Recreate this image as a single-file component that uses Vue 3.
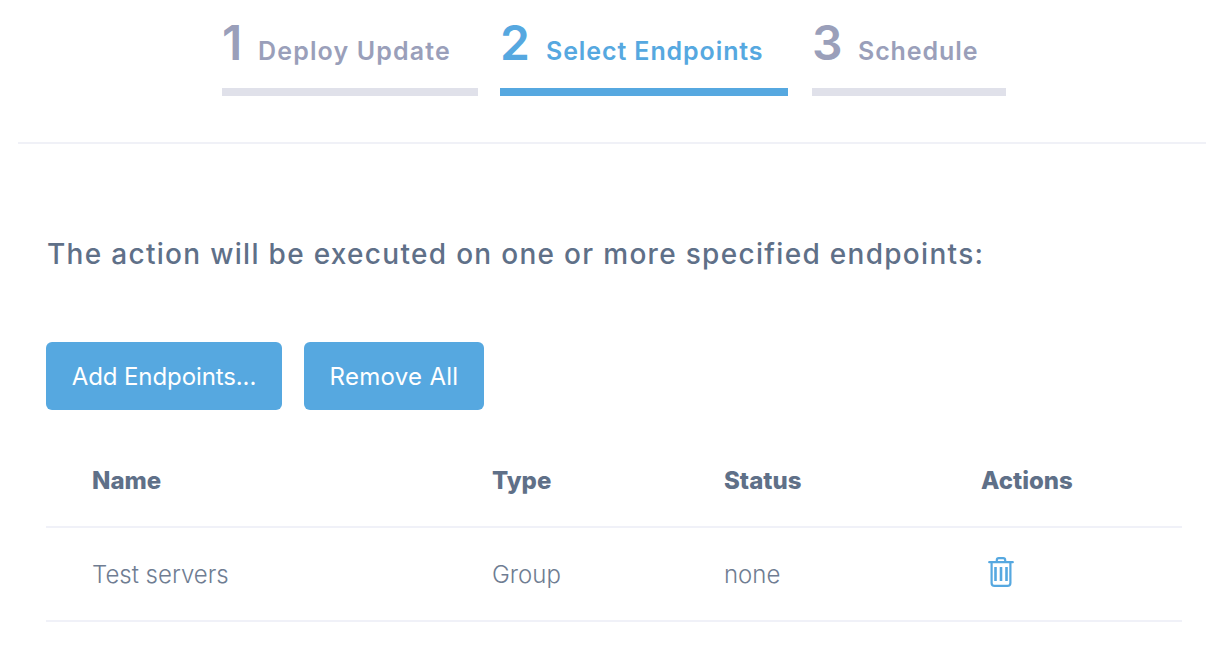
<template>
  <div class="page">
    <!-- Steps -->
    <div class="steps">
      <div
        v-for="step in steps"
        :key="step.num"
        class="step"
        :class="[step.cls, { active: step.active }]"
      >
        <span class="step-num">{{ step.num }}</span>
        <span class="step-label">{{ step.label }}</span>
      </div>
    </div>

    <div class="content">
      <p class="intro">The action will be executed on one or more specified endpoints:</p>

      <div class="actions">
        <button class="btn btn-add">Add Endpoints...</button>
        <button class="btn btn-remove">Remove All</button>
      </div>

      <!-- Endpoints table -->
      <div class="table">
        <div class="row head">
          <div>Name</div>
          <div>Type</div>
          <div>Status</div>
          <div>Actions</div>
        </div>
        <div v-for="item in endpoints" :key="item.name" class="row body">
          <div>{{ item.name }}</div>
          <div>{{ item.type }}</div>
          <div>{{ item.status }}</div>
          <div>
            <svg class="trash" viewBox="0 0 26 30" fill="none" stroke="#56a8e0" stroke-width="2.2" stroke-linecap="round" stroke-linejoin="round">
              <path d="M1.2 5.2h23.6" />
              <path d="M8.8 5V3.2a2 2 0 0 1 2-2h4.4a2 2 0 0 1 2 2V5" />
              <path d="M3.6 5.5v20.4a3 3 0 0 0 3 3h12.8a3 3 0 0 0 3-3V5.5" />
              <path stroke-width="2.6" stroke-linecap="butt" d="M7.5 10v14M13 10v14M18.5 10v14" />
            </svg>
          </div>
        </div>
      </div>
    </div>
  </div>
</template>

<script setup>
const steps = [
  { num: 1, label: 'Deploy Update', cls: 'step-one', active: false },
  { num: 2, label: 'Select Endpoints', cls: 'step-two', active: true },
  { num: 3, label: 'Schedule', cls: 'step-three', active: false }
];

const endpoints = [
  { name: 'Test servers', type: 'Group', status: 'none' }
];
</script>

<style>
html,
body {
  margin: 0;
  background: #fff;
}
</style>

<style scoped>
.page {
  width: 1206px;
  height: 646px;
  overflow: hidden;
  font-family: Inter, "Open Sans", sans-serif;
  background: #fff;
}

.steps {
  display: flex;
  gap: 22px;
  height: 144px;
  box-sizing: border-box;
  margin-left: 18px;
  padding: 14px 0 0 204px;
  border-bottom: 2px solid #f0f1f7;
}

.step {
  display: flex;
  align-items: baseline;
  height: 74px;
  border-bottom: 8px solid #e0e1ea;
  color: #9a9fba;
}

.step-one { width: 256px; }
.step-two { width: 288px; }
.step-three { width: 194px; margin-left: 2px; }

.step.active {
  color: #56a8e0;
  border-bottom-color: #56a8e0;
}

.step-num {
  font-size: 48px;
  font-weight: 600;
  line-height: 58px;
  width: 36px;
}

.step-two .step-num,
.step-three .step-num {
  width: 46px;
}

.step-label {
  font-size: 25px;
  font-weight: 600;
  letter-spacing: 0.9px;
  white-space: nowrap;
}

.step-one .step-label {
  letter-spacing: 1.15px;
}

.content {
  padding: 0 24px 0 46px;
}

.intro {
  margin: 92px 0 0 1px;
  font-size: 28px;
  line-height: 36px;
  font-weight: 500;
  letter-spacing: 1.3px;
  color: #5f7088;
  white-space: nowrap;
}

.actions {
  display: flex;
  gap: 22px;
  margin-top: 70px;
}

.btn {
  height: 68px;
  padding: 0;
  border: none;
  border-radius: 6px;
  background: #56a8e0;
  color: #fff;
  font-family: inherit;
  font-size: 24px;
  font-weight: 400;
}

.btn-add { width: 236px; letter-spacing: -0.1px; }
.btn-remove { width: 180px; letter-spacing: 0.3px; }

.row {
  display: grid;
  grid-template-columns: 400px 232px 257px 1fr;
  padding-left: 46px;
  align-items: center;
  border-bottom: 2px solid #f0f1f8;
  box-sizing: border-box;
}

.head {
  height: 118px;
  padding-top: 24px;
  font-size: 24px;
  font-weight: 800;
  color: #5f7088;
}

.body {
  height: 94px;
  font-size: 24px;
  color: #6f7d92;
  font-weight: 300;
}

.trash {
  display: block;
  width: 26px;
  height: 30px;
  margin: -4px 0 0 7px;
}
</style>
